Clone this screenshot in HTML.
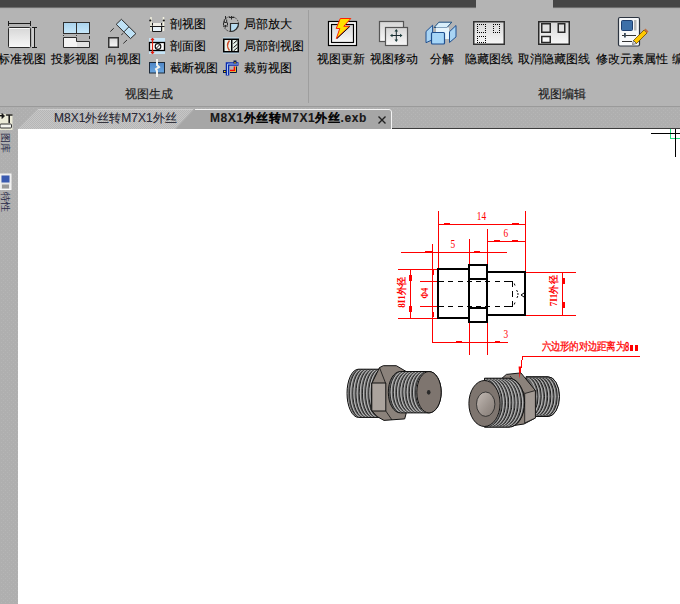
<!DOCTYPE html>
<html><head><meta charset="utf-8">
<style>
*{margin:0;padding:0;box-sizing:border-box}
html,body{width:680px;height:604px;overflow:hidden;background:#fff;font-family:"Liberation Sans",sans-serif}
.a{position:absolute}
#top{left:0;top:0;width:680px;height:7px;background:#464646}
#rib{left:0;top:9px;width:680px;height:98px;background:#b4b4b4}
#ribline{left:0;top:106px;width:680px;height:1px;background:#9a9a9a}
#tabs{left:0;top:107px;width:680px;height:22px;background:#b0b0b0}
#side{left:0;top:107px;width:18px;height:497px;background:#b0b0b0}
#canvas{left:18px;top:129px;width:662px;height:475px;background:#fff}
.t{position:absolute;font-size:12px;line-height:12px;color:#000;white-space:nowrap;-webkit-text-stroke:0.1px #000}
.g{position:absolute;font-size:12px;line-height:12px;color:#1a1a1a;white-space:nowrap;-webkit-text-stroke:0.15px #1a1a1a}
</style></head><body>
<div class="a" id="top"></div>
<div class="a" style="left:0;top:7px;width:680px;height:1px;background:#6e6e6e"></div><div class="a" style="left:0;top:8px;width:680px;height:1px;background:#adadad"></div><div class="a" style="left:476px;top:0;width:77px;height:9px;background:#b4b4b4"></div>
<div class="a" id="rib"></div>
<div class="a" id="ribline"></div>
<div class="a" id="tabs"></div>
<div class="a" id="side"></div>
<div class="a" id="canvas"></div>


<svg class="a" style="left:0;top:0" width="680" height="107">
<defs>
<linearGradient id="gw" x1="0" y1="0" x2="0" y2="1"><stop offset="0" stop-color="#d6d6d6"/><stop offset="1" stop-color="#f8f8f8"/></linearGradient>
<linearGradient id="gb" x1="0" y1="0" x2="0" y2="1"><stop offset="0" stop-color="#a9d2ec"/><stop offset="1" stop-color="#c8e8fa"/></linearGradient>
<linearGradient id="gblue" x1="0" y1="0" x2="0" y2="1"><stop offset="0" stop-color="#4f86c6"/><stop offset="1" stop-color="#6aa6e0"/></linearGradient>
</defs>
<!-- 标准视图 -->
<g stroke="#1a1a1a" stroke-width="1" fill="none">
<path d="M8.5 23.5H30.5M8.5 21V26M30.5 21V26M34.5 27.5V47.5M32 27.5H37M32 47.5H37"/>
</g>
<rect x="8.5" y="27.5" width="22" height="20" rx="1" fill="url(#gw)" stroke="#2a2a2a"/><path d="M9.5 28.5H29.5" stroke="#fafafa"/>
<line x1="33" y1="28" x2="33" y2="47" stroke="#e8e8e8"/>
<!-- 投影视图 -->
<rect x="63.5" y="22.5" width="26" height="11" fill="url(#gb)" stroke="#2e2e2e"/>
<line x1="76.5" y1="22.5" x2="76.5" y2="33.5" stroke="#2e2e2e"/>
<path d="M63.5 37.5H76.5V41.5H89.5V47.5H63.5Z" fill="#f4f4f4" stroke="#2e2e2e"/>
<rect x="77" y="42" width="12" height="5" fill="#e2e2e2"/>
<rect x="63" y="35" width="1" height="1" fill="#333"/><rect x="76" y="35" width="1" height="1" fill="#333"/><rect x="89" y="36" width="1" height="3" fill="#333"/>
<!-- 向视图 -->
<path d="M121.4 19.3L116.2 24.3L130.5 38.6L135.9 33.6Z" fill="#bfe2f6" stroke="#2a2a2a"/>
<path d="M128.7 27L124 31.8" stroke="#2a2a2a"/>
<path d="M110.3 31.6L113.8 28.2M121.3 34.8L123.3 33.3M123.3 43.5L127 40" stroke="#333"/>
<rect x="108.75" y="37.75" width="9.5" height="9.5" fill="url(#gw)" stroke="#333" stroke-width="1.5"/>
<!-- 剖视图 small -->
<path d="M151 17V31M163.5 17V31" stroke="#f4f2e0" stroke-width="1.5"/>
<rect x="152.5" y="23" width="9" height="3" fill="#f0eee6"/>
<path d="M152.5 27V31.5H161.5V27" fill="#e8f2f8" stroke="#1a1a1a" stroke-width="1"/>
<path d="M150 26.5H164.5" stroke="#1a1a1a" stroke-width="1"/>
<path d="M152.5 23V25.5M161.5 23V25.5" stroke="#1a1a1a" stroke-width="1"/>
<circle cx="150.3" cy="20.5" r="1.1" fill="#111"/><circle cx="163.8" cy="20.5" r="1.1" fill="#111"/>
<!-- 剖面图 -->
<rect x="149" y="38" width="16" height="16" fill="#c6e4f6"/>
<rect x="149.5" y="42.5" width="15" height="8" fill="#fff" stroke="#000" stroke-width="1.3"/>
<circle cx="158" cy="46.5" r="2.8" fill="none" stroke="#111" stroke-width="1.2"/>
<path d="M156 48.5L160 44.5" stroke="#111"/>
<path d="M152.5 39V53M151 40L152.5 38.5L154 40M151 52L152.5 53.5L154 52" stroke="#e02010" fill="none" stroke-width="1.2"/>
<!-- 截断视图 -->
<rect x="149.5" y="62.5" width="15" height="10.5" fill="url(#gblue)" stroke="#1d2a3a"/>
<path d="M157 59V65L159 67L156 69L157 71V77" stroke="#f4f4f0" stroke-width="2" fill="none"/>
<!-- 局部放大 -->
<circle cx="231" cy="24" r="7.5" fill="none" stroke="#333" stroke-width="1" stroke-dasharray="1.5 1"/>
<path d="M230.5 23.5H238.5A8 8 0 0 1 230.5 31.5Z" fill="#b8dcf0" stroke="#2a2a2a" stroke-width="1.2"/>
<path d="M225.5 16V19M224.3 19.5V22.5H226.7V19.5M223.5 22.5V25M227.5 22.5V25M225.5 25V27.5M223 26H228M229 17.5H234M231.5 16V19.5" stroke="#2a2a2a" fill="none" stroke-width="1"/>
<!-- 局部剖视图 -->
<rect x="223" y="37.5" width="16" height="16" fill="#bfe0f4"/>
<rect x="223.75" y="39.25" width="14.5" height="12.5" fill="#e8f2ea" stroke="#000" stroke-width="1.5"/>
<path d="M229.5 40.5Q225.5 45.5 229.5 50.5" stroke="#d04a28" stroke-width="1.4" fill="none"/>
<rect x="231" y="40" width="1.5" height="11" fill="#000"/>
<path d="M233.5 43.5L237.5 40M233.5 47.5L237.5 44M233.5 51L237.5 47.5" stroke="#111" stroke-width="1"/>
<!-- 裁剪视图 -->
<path d="M227.5 75.5V64H238.5" stroke="#0a2ab0" stroke-width="3.5" fill="none"/>
<path d="M227.5 75V64H238" stroke="#a8c8f0" stroke-width="1" fill="none"/>
<path d="M230 70.5H234.5V66.5" stroke="#ff0000" stroke-width="1.6" fill="none"/>
<path d="M230 72H236V66.5" stroke="#ffd000" stroke-width="1.2" fill="none"/>
<path d="M236.5 66.5V72.5H230" stroke="#0a1a40" stroke-width="1" fill="none"/>
<rect x="223" y="70" width="3" height="3" fill="#0a1a50"/><rect x="233.5" y="60.5" width="3" height="3" fill="#0a1a50"/>
<rect x="224" y="71" width="1.5" height="1" fill="#ffd000"/><rect x="234.5" y="62" width="1" height="1.5" fill="#ffd000"/>
<!-- 视图更新 -->
<rect x="328.5" y="21.5" width="28" height="24" fill="#fff" stroke="#000" stroke-width="1.2"/>
<rect x="331.5" y="24.5" width="22" height="18" fill="url(#gw)" stroke="#000" stroke-width="1.2"/>
<path d="M340.3 18.5H350.8L343.8 26.3H349.5L336.3 38.6L339.8 28.5H336.2Z" fill="#ffe000" stroke="#ff2000" stroke-width="1"/>
<path d="M349.8 26.5L337 38.5" stroke="#111" stroke-width="1"/>
<!-- 视图移动 -->
<rect x="379.5" y="21.5" width="24" height="20" fill="url(#gw)" stroke="#555" stroke-width="1.2"/>
<rect x="385.5" y="27.5" width="22" height="18" fill="url(#gw)" stroke="#555" stroke-width="1.2"/>
<path d="M396.3 30V41M391 35.5H401.5" stroke="#1a2a30" stroke-width="1"/>
<path d="M396.3 29L394.5 31.5H398.1ZM396.3 42L394.5 39.5H398.1ZM390 35.5L392.5 33.7V37.3ZM402.5 35.5L400 33.7V37.3Z" fill="#1a3a3a"/>
<!-- 分解 -->
<path d="M434.1 27.5L438.9 22.2H451.8L447 27.5Z" fill="#d8eefa" stroke="#1f4f7f"/>
<rect x="436" y="27.5" width="13" height="11.5" fill="#e6f4fc"/>
<path d="M426 31.5L432.6 25.2V39.7L426 42.7Z" fill="#a8d4f4" stroke="#1f4f8f"/>
<path d="M449.5 31.7L456 25.5V36.9L449.5 42.5Z" fill="#a8d4f4" stroke="#1f4f8f"/>
<rect x="431.5" y="32.5" width="13" height="11.5" rx="1" fill="#a6d6f8" stroke="#1f4f8f" stroke-width="1.2"/>
<!-- 隐藏图线 -->
<rect x="473.75" y="21.75" width="30.5" height="22.5" fill="url(#gw)" stroke="#333" stroke-width="1.5"/>
<g fill="#000" shape-rendering="crispEdges">
<rect x="477" y="24" width="1" height="1"/>
<rect x="477" y="26" width="1" height="1"/>
<rect x="477" y="28" width="1" height="1"/>
<rect x="477" y="30" width="1" height="1"/>
<rect x="477" y="32" width="1" height="1"/>
<rect x="479" y="24" width="1" height="1"/>
<rect x="479" y="32" width="1" height="1"/>
<rect x="481" y="24" width="1" height="1"/>
<rect x="481" y="32" width="1" height="1"/>
<rect x="483" y="24" width="1" height="1"/>
<rect x="483" y="32" width="1" height="1"/>
<rect x="485" y="24" width="1" height="1"/>
<rect x="485" y="26" width="1" height="1"/>
<rect x="485" y="28" width="1" height="1"/>
<rect x="485" y="30" width="1" height="1"/>
<rect x="485" y="32" width="1" height="1"/>
<rect x="493" y="24" width="1" height="1"/>
<rect x="493" y="26" width="1" height="1"/>
<rect x="493" y="28" width="1" height="1"/>
<rect x="493" y="30" width="1" height="1"/>
<rect x="493" y="32" width="1" height="1"/>
<rect x="495" y="24" width="1" height="1"/>
<rect x="495" y="32" width="1" height="1"/>
<rect x="497" y="24" width="1" height="1"/>
<rect x="497" y="32" width="1" height="1"/>
<rect x="499" y="24" width="1" height="1"/>
<rect x="499" y="26" width="1" height="1"/>
<rect x="499" y="28" width="1" height="1"/>
<rect x="499" y="30" width="1" height="1"/>
<rect x="499" y="32" width="1" height="1"/>
<rect x="477" y="36" width="1" height="1"/>
<rect x="477" y="38" width="1" height="1"/>
<rect x="477" y="40" width="1" height="1"/>
<rect x="477" y="42" width="1" height="1"/>
<rect x="479" y="36" width="1" height="1"/>
<rect x="479" y="42" width="1" height="1"/>
<rect x="481" y="36" width="1" height="1"/>
<rect x="481" y="42" width="1" height="1"/>
<rect x="483" y="36" width="1" height="1"/>
<rect x="483" y="42" width="1" height="1"/>
<rect x="485" y="36" width="1" height="1"/>
<rect x="485" y="38" width="1" height="1"/>
<rect x="485" y="40" width="1" height="1"/>
<rect x="485" y="42" width="1" height="1"/>
</g>
<!-- 取消隐藏图线 -->
<rect x="538.75" y="21.75" width="30.5" height="22.5" fill="url(#gw)" stroke="#2a2a2a" stroke-width="1.5"/>
<rect x="541.75" y="23.75" width="8.5" height="8.5" fill="#e0e0e0" stroke="#2a2a2a" stroke-width="1.5"/>
<rect x="558.25" y="23.75" width="6.5" height="8.5" fill="#e0e0e0" stroke="#2a2a2a" stroke-width="1.5"/>
<rect x="541.75" y="36.5" width="8.5" height="6" fill="#f8f8f8" stroke="#2a2a2a" stroke-width="1.5"/>
<!-- 修改元素属性 -->
<rect x="618.5" y="17.5" width="21" height="28.5" rx="1.5" fill="#f6f8fa" stroke="#2c3440" stroke-width="1.2"/>
<rect x="621.5" y="20.5" width="11" height="10" rx="1" fill="#3d6fa8" stroke="#1f3f6f"/>
<rect x="634" y="20" width="2.5" height="10.5" fill="#b8b8b8"/>
<path d="M622 35.5H636M622 41.5H632" stroke="#333" stroke-width="1"/>
<rect x="624" y="33" width="1.8" height="4.5" fill="#3a4a5a"/>
<path d="M633.5 40.5L644 30L647 33L636.5 43.5Z" fill="#ffc800" stroke="#6a4800" stroke-width="0.8"/>
<path d="M644 30L645.5 28.5L648.5 31.5L647 33Z" fill="#c07040"/>
<path d="M633.5 40.5L632.5 44.5L636.5 43.5Z" fill="#e8e8e8" stroke="#333" stroke-width="0.6"/>
<!-- top-right of ribbon separator tick -->
</svg>

<!-- ribbon labels -->
<div class="t" style="left:-2px;top:53px">标准视图</div>
<div class="t" style="left:51px;top:53px">投影视图</div>
<div class="t" style="left:105px;top:53px">向视图</div>
<div class="t" style="left:170px;top:18px">剖视图</div>
<div class="t" style="left:170px;top:40px">剖面图</div>
<div class="t" style="left:170px;top:62px">截断视图</div>
<div class="t" style="left:244px;top:18px">局部放大</div>
<div class="t" style="left:244px;top:40px">局部剖视图</div>
<div class="t" style="left:244px;top:62px">裁剪视图</div>
<div class="g" style="left:125px;top:88px">视图生成</div>
<div class="a" style="left:308px;top:10px;width:1px;height:93px;background:#9e9e9e"></div>
<div class="t" style="left:317px;top:53px">视图更新</div>
<div class="t" style="left:370px;top:53px">视图移动</div>
<div class="t" style="left:430px;top:53px">分解</div>
<div class="t" style="left:465px;top:53px">隐藏图线</div>
<div class="t" style="left:518px;top:53px">取消隐藏图线</div>
<div class="t" style="left:596px;top:53px">修改元素属性</div>
<div class="t" style="left:672px;top:53px">编</div>
<div class="g" style="left:538px;top:88px">视图编辑</div>


<svg class="a" style="left:0;top:129px" width="680" height="475" viewBox="0 129 680 475" shape-rendering="crispEdges">
<defs>
<clipPath id="clA1"><path d="M358.5 369.2H378V417.4H358.5A11.5 24.1 0 0 1 358.5 369.2Z"/></clipPath>
<clipPath id="clA2"><path d="M386 371.5H429V412.9H386Z"/></clipPath>
<clipPath id="clB1"><path d="M484.5 378.2H524V427.2H484.5Z"/></clipPath>
<clipPath id="clB2"><path d="M528 376.7H548A11.5 19.9 0 0 1 548 416.5H528Z"/></clipPath>
<linearGradient id="holeg" x1="0" y1="0" x2="1" y2="1"><stop offset="0" stop-color="#c4bcb6"/><stop offset="0.6" stop-color="#9a918b"/><stop offset="1" stop-color="#857c76"/></linearGradient>
</defs>
<g stroke="#ff0000" stroke-width="1" fill="none">
<path d="M438.5 211V269M525.5 211V272M438.5 224.5H525.5"/>
<path d="M487.5 229V272M487.5 241.5H525.5"/>
<path d="M469.5 239V265M432.5 244V343M401 252.5H507"/>
<path d="M398 269.5H438M398 318.5H438M410.5 269.5V318.5"/>
<path d="M420 281.5H438M420 306.5H438"/>
<path d="M526 272.5H576M526 315.5H576M562.5 272.5V315.5"/>
<path d="M469.5 322V355M487.5 322V355M432.5 342.5H508"/>
<path d="M522.5 356.5H640M522.5 356.5L519.5 379"/>
</g>
<g fill="#ff0000">
<rect x="444" y="223" width="6" height="2"/><rect x="512" y="223" width="7" height="2"/>
<rect x="494" y="240" width="6" height="2"/><rect x="512" y="240" width="6" height="2"/>
<rect x="425" y="251" width="7" height="2"/><rect x="474" y="251" width="6" height="2"/>
<rect x="409" y="275" width="3" height="6"/><rect x="409" y="306" width="3" height="6"/>
<rect x="432" y="270" width="2" height="5"/><rect x="432" y="312" width="2" height="5"/>
<rect x="562" y="278" width="3" height="6"/><rect x="562" y="302" width="3" height="6"/>
<rect x="456" y="341" width="6" height="2"/><rect x="495" y="341" width="5" height="2"/>
<path d="M518.5 367L521 367L520 379Z"/>
</g>
<g stroke="#000" stroke-width="2" fill="none">
<path d="M437 269H469M438 268V319M437 318H469"/>
<path d="M469 265H487V322H469Z"/>
<path d="M469 279H487M469 308H487"/>
<path d="M487 272H525V315H487"/>
</g>
<g stroke="#000" stroke-width="1" fill="none">
<path d="M439 281.5H512" stroke-dasharray="5 4.25"/>
<path d="M439 306.5H512" stroke-dasharray="5 4.25"/>
<path d="M507 281.5H512.5V287M512.5 291V297M512.5 301V306.5H507"/>
</g>
<g shape-rendering="geometricPrecision" fill="none" stroke="#000" stroke-width="1">
<path d="M514.2 283.5L515 285.5M514.2 304.5L515 302.5"/>
<path d="M516.5 290Q519.5 294.3 516.5 298.6" stroke-dasharray="2 1.2"/>
<path d="M524 293L521 295L524 297" stroke-width="1"/>
</g>
<g shape-rendering="geometricPrecision">
<defs>
<clipPath id="kA1"><path d="M358.5 369.2H382V417.4H358.5A11.5 24.1 0 0 1 358.5 369.2Z"/></clipPath>
<clipPath id="kA2"><path d="M400.5 371.5A12.2 20.7 0 0 0 400.5 412.9H429A12.2 20.7 0 0 0 429 371.5Z"/></clipPath>
<clipPath id="kB1"><path d="M484.5 378.2H509A15.6 24.5 0 0 1 509 427.2H484.5Z"/></clipPath>
<clipPath id="kB2"><path d="M526 376.7H548A11.5 19.9 0 0 1 548 416.5H526Z"/></clipPath>
<linearGradient id="cylg" x1="0" y1="0" x2="0" y2="1"><stop offset="0" stop-color="#555"/><stop offset="0.45" stop-color="#8a8a8a"/><stop offset="1" stop-color="#505050"/></linearGradient>
</defs>
<!-- Part A -->
<path d="M358.5 369.2H382V417.4H358.5A11.5 24.1 0 0 1 358.5 369.2Z" fill="url(#cylg)"/>
<g clip-path="url(#kA1)"><path d="M359.00 369.2A11.5 24.1 0 0 0 359.00 417.4" stroke="#b4b4b4" stroke-width="1.2" fill="none"/><path d="M360.30 369.2A11.5 24.1 0 0 0 360.30 417.4" stroke="#505050" stroke-width="0.8" fill="none"/><path d="M361.20 369.2A11.5 24.1 0 0 0 361.20 417.4" stroke="#1c1c1c" stroke-width="1.0" fill="none"/><path d="M362.20 369.2A11.5 24.1 0 0 0 362.20 417.4" stroke="#b4b4b4" stroke-width="1.2" fill="none"/><path d="M363.50 369.2A11.5 24.1 0 0 0 363.50 417.4" stroke="#505050" stroke-width="0.8" fill="none"/><path d="M364.40 369.2A11.5 24.1 0 0 0 364.40 417.4" stroke="#1c1c1c" stroke-width="1.0" fill="none"/><path d="M365.40 369.2A11.5 24.1 0 0 0 365.40 417.4" stroke="#b4b4b4" stroke-width="1.2" fill="none"/><path d="M366.70 369.2A11.5 24.1 0 0 0 366.70 417.4" stroke="#505050" stroke-width="0.8" fill="none"/><path d="M367.60 369.2A11.5 24.1 0 0 0 367.60 417.4" stroke="#1c1c1c" stroke-width="1.0" fill="none"/><path d="M368.60 369.2A11.5 24.1 0 0 0 368.60 417.4" stroke="#b4b4b4" stroke-width="1.2" fill="none"/><path d="M369.90 369.2A11.5 24.1 0 0 0 369.90 417.4" stroke="#505050" stroke-width="0.8" fill="none"/><path d="M370.80 369.2A11.5 24.1 0 0 0 370.80 417.4" stroke="#1c1c1c" stroke-width="1.0" fill="none"/><path d="M371.80 369.2A11.5 24.1 0 0 0 371.80 417.4" stroke="#b4b4b4" stroke-width="1.2" fill="none"/><path d="M373.10 369.2A11.5 24.1 0 0 0 373.10 417.4" stroke="#505050" stroke-width="0.8" fill="none"/><path d="M374.00 369.2A11.5 24.1 0 0 0 374.00 417.4" stroke="#1c1c1c" stroke-width="1.0" fill="none"/><path d="M375.00 369.2A11.5 24.1 0 0 0 375.00 417.4" stroke="#b4b4b4" stroke-width="1.2" fill="none"/><path d="M376.30 369.2A11.5 24.1 0 0 0 376.30 417.4" stroke="#505050" stroke-width="0.8" fill="none"/><path d="M377.20 369.2A11.5 24.1 0 0 0 377.20 417.4" stroke="#1c1c1c" stroke-width="1.0" fill="none"/><path d="M378.20 369.2A11.5 24.1 0 0 0 378.20 417.4" stroke="#b4b4b4" stroke-width="1.2" fill="none"/><path d="M379.50 369.2A11.5 24.1 0 0 0 379.50 417.4" stroke="#505050" stroke-width="0.8" fill="none"/><path d="M380.40 369.2A11.5 24.1 0 0 0 380.40 417.4" stroke="#1c1c1c" stroke-width="1.0" fill="none"/><path d="M381.40 369.2A11.5 24.1 0 0 0 381.40 417.4" stroke="#b4b4b4" stroke-width="1.2" fill="none"/><path d="M382.70 369.2A11.5 24.1 0 0 0 382.70 417.4" stroke="#505050" stroke-width="0.8" fill="none"/><path d="M383.60 369.2A11.5 24.1 0 0 0 383.60 417.4" stroke="#1c1c1c" stroke-width="1.0" fill="none"/><path d="M384.60 369.2A11.5 24.1 0 0 0 384.60 417.4" stroke="#b4b4b4" stroke-width="1.2" fill="none"/><path d="M385.90 369.2A11.5 24.1 0 0 0 385.90 417.4" stroke="#505050" stroke-width="0.8" fill="none"/><path d="M386.80 369.2A11.5 24.1 0 0 0 386.80 417.4" stroke="#1c1c1c" stroke-width="1.0" fill="none"/><path d="M387.80 369.2A11.5 24.1 0 0 0 387.80 417.4" stroke="#b4b4b4" stroke-width="1.2" fill="none"/><path d="M389.10 369.2A11.5 24.1 0 0 0 389.10 417.4" stroke="#505050" stroke-width="0.8" fill="none"/><path d="M390.00 369.2A11.5 24.1 0 0 0 390.00 417.4" stroke="#1c1c1c" stroke-width="1.0" fill="none"/><path d="M391.00 369.2A11.5 24.1 0 0 0 391.00 417.4" stroke="#b4b4b4" stroke-width="1.2" fill="none"/><path d="M392.30 369.2A11.5 24.1 0 0 0 392.30 417.4" stroke="#505050" stroke-width="0.8" fill="none"/><path d="M393.20 369.2A11.5 24.1 0 0 0 393.20 417.4" stroke="#1c1c1c" stroke-width="1.0" fill="none"/></g>
<path d="M358.5 369.2H382V417.4H358.5A11.5 24.1 0 0 1 358.5 369.2Z" fill="none" stroke="#111" stroke-width="1"/>
<path d="M372 383L379.5 367.6L383.3 365.7H396.3L406.2 371.5L410 380L406 414L404.7 418.9L384 420.4L377.2 416.6L371 410Z" fill="#8b827b" stroke="#111" stroke-width="1"/>
<path d="M379.5 367.6L385.5 383" fill="none" stroke="#111" stroke-width="0.8"/>
<path d="M371.8 383H385.8V411H371.8Z" fill="#aba39d" stroke="#111" stroke-width="1"/>
<path d="M385.8 411L392 420" fill="none" stroke="#111" stroke-width="0.8"/>
<path d="M400.5 371.5A12.2 20.7 0 0 0 400.5 412.9H429A12.2 20.7 0 0 0 429 371.5Z" fill="url(#cylg)"/>
<g clip-path="url(#kA2)"><path d="M400.20 371.5A12.2 20.7 0 0 0 400.20 412.9" stroke="#b4b4b4" stroke-width="1.2" fill="none"/><path d="M401.50 371.5A12.2 20.7 0 0 0 401.50 412.9" stroke="#505050" stroke-width="0.8" fill="none"/><path d="M402.40 371.5A12.2 20.7 0 0 0 402.40 412.9" stroke="#1c1c1c" stroke-width="1.0" fill="none"/><path d="M403.40 371.5A12.2 20.7 0 0 0 403.40 412.9" stroke="#b4b4b4" stroke-width="1.2" fill="none"/><path d="M404.70 371.5A12.2 20.7 0 0 0 404.70 412.9" stroke="#505050" stroke-width="0.8" fill="none"/><path d="M405.60 371.5A12.2 20.7 0 0 0 405.60 412.9" stroke="#1c1c1c" stroke-width="1.0" fill="none"/><path d="M406.60 371.5A12.2 20.7 0 0 0 406.60 412.9" stroke="#b4b4b4" stroke-width="1.2" fill="none"/><path d="M407.90 371.5A12.2 20.7 0 0 0 407.90 412.9" stroke="#505050" stroke-width="0.8" fill="none"/><path d="M408.80 371.5A12.2 20.7 0 0 0 408.80 412.9" stroke="#1c1c1c" stroke-width="1.0" fill="none"/><path d="M409.80 371.5A12.2 20.7 0 0 0 409.80 412.9" stroke="#b4b4b4" stroke-width="1.2" fill="none"/><path d="M411.10 371.5A12.2 20.7 0 0 0 411.10 412.9" stroke="#505050" stroke-width="0.8" fill="none"/><path d="M412.00 371.5A12.2 20.7 0 0 0 412.00 412.9" stroke="#1c1c1c" stroke-width="1.0" fill="none"/><path d="M413.00 371.5A12.2 20.7 0 0 0 413.00 412.9" stroke="#b4b4b4" stroke-width="1.2" fill="none"/><path d="M414.30 371.5A12.2 20.7 0 0 0 414.30 412.9" stroke="#505050" stroke-width="0.8" fill="none"/><path d="M415.20 371.5A12.2 20.7 0 0 0 415.20 412.9" stroke="#1c1c1c" stroke-width="1.0" fill="none"/><path d="M416.20 371.5A12.2 20.7 0 0 0 416.20 412.9" stroke="#b4b4b4" stroke-width="1.2" fill="none"/><path d="M417.50 371.5A12.2 20.7 0 0 0 417.50 412.9" stroke="#505050" stroke-width="0.8" fill="none"/><path d="M418.40 371.5A12.2 20.7 0 0 0 418.40 412.9" stroke="#1c1c1c" stroke-width="1.0" fill="none"/><path d="M419.40 371.5A12.2 20.7 0 0 0 419.40 412.9" stroke="#b4b4b4" stroke-width="1.2" fill="none"/><path d="M420.70 371.5A12.2 20.7 0 0 0 420.70 412.9" stroke="#505050" stroke-width="0.8" fill="none"/><path d="M421.60 371.5A12.2 20.7 0 0 0 421.60 412.9" stroke="#1c1c1c" stroke-width="1.0" fill="none"/><path d="M422.60 371.5A12.2 20.7 0 0 0 422.60 412.9" stroke="#b4b4b4" stroke-width="1.2" fill="none"/><path d="M423.90 371.5A12.2 20.7 0 0 0 423.90 412.9" stroke="#505050" stroke-width="0.8" fill="none"/><path d="M424.80 371.5A12.2 20.7 0 0 0 424.80 412.9" stroke="#1c1c1c" stroke-width="1.0" fill="none"/><path d="M425.80 371.5A12.2 20.7 0 0 0 425.80 412.9" stroke="#b4b4b4" stroke-width="1.2" fill="none"/><path d="M427.10 371.5A12.2 20.7 0 0 0 427.10 412.9" stroke="#505050" stroke-width="0.8" fill="none"/><path d="M428.00 371.5A12.2 20.7 0 0 0 428.00 412.9" stroke="#1c1c1c" stroke-width="1.0" fill="none"/><path d="M429.00 371.5A12.2 20.7 0 0 0 429.00 412.9" stroke="#b4b4b4" stroke-width="1.2" fill="none"/><path d="M430.30 371.5A12.2 20.7 0 0 0 430.30 412.9" stroke="#505050" stroke-width="0.8" fill="none"/><path d="M431.20 371.5A12.2 20.7 0 0 0 431.20 412.9" stroke="#1c1c1c" stroke-width="1.0" fill="none"/><path d="M432.20 371.5A12.2 20.7 0 0 0 432.20 412.9" stroke="#b4b4b4" stroke-width="1.2" fill="none"/><path d="M433.50 371.5A12.2 20.7 0 0 0 433.50 412.9" stroke="#505050" stroke-width="0.8" fill="none"/><path d="M434.40 371.5A12.2 20.7 0 0 0 434.40 412.9" stroke="#1c1c1c" stroke-width="1.0" fill="none"/></g>
<path d="M400.5 371.5A12.2 20.7 0 0 0 400.5 412.9H429A12.2 20.7 0 0 0 429 371.5Z" fill="none" stroke="#111" stroke-width="1"/>
<ellipse cx="429" cy="392.2" rx="12.2" ry="20.7" fill="#7e756f" stroke="#111" stroke-width="1"/>
<ellipse cx="428.7" cy="392.3" rx="1.8" ry="2.4" fill="#2a2a2a"/>
<!-- Part B -->
<path d="M526 376.7H548A11.5 19.9 0 0 1 548 416.5H526Z" fill="url(#cylg)"/>
<g clip-path="url(#kB2)"><path d="M524.50 376.7A11.5 19.9 0 0 1 524.50 416.5" stroke="#b4b4b4" stroke-width="1.2" fill="none"/><path d="M525.80 376.7A11.5 19.9 0 0 1 525.80 416.5" stroke="#505050" stroke-width="0.8" fill="none"/><path d="M526.70 376.7A11.5 19.9 0 0 1 526.70 416.5" stroke="#1c1c1c" stroke-width="1.0" fill="none"/><path d="M527.70 376.7A11.5 19.9 0 0 1 527.70 416.5" stroke="#b4b4b4" stroke-width="1.2" fill="none"/><path d="M529.00 376.7A11.5 19.9 0 0 1 529.00 416.5" stroke="#505050" stroke-width="0.8" fill="none"/><path d="M529.90 376.7A11.5 19.9 0 0 1 529.90 416.5" stroke="#1c1c1c" stroke-width="1.0" fill="none"/><path d="M530.90 376.7A11.5 19.9 0 0 1 530.90 416.5" stroke="#b4b4b4" stroke-width="1.2" fill="none"/><path d="M532.20 376.7A11.5 19.9 0 0 1 532.20 416.5" stroke="#505050" stroke-width="0.8" fill="none"/><path d="M533.10 376.7A11.5 19.9 0 0 1 533.10 416.5" stroke="#1c1c1c" stroke-width="1.0" fill="none"/><path d="M534.10 376.7A11.5 19.9 0 0 1 534.10 416.5" stroke="#b4b4b4" stroke-width="1.2" fill="none"/><path d="M535.40 376.7A11.5 19.9 0 0 1 535.40 416.5" stroke="#505050" stroke-width="0.8" fill="none"/><path d="M536.30 376.7A11.5 19.9 0 0 1 536.30 416.5" stroke="#1c1c1c" stroke-width="1.0" fill="none"/><path d="M537.30 376.7A11.5 19.9 0 0 1 537.30 416.5" stroke="#b4b4b4" stroke-width="1.2" fill="none"/><path d="M538.60 376.7A11.5 19.9 0 0 1 538.60 416.5" stroke="#505050" stroke-width="0.8" fill="none"/><path d="M539.50 376.7A11.5 19.9 0 0 1 539.50 416.5" stroke="#1c1c1c" stroke-width="1.0" fill="none"/><path d="M540.50 376.7A11.5 19.9 0 0 1 540.50 416.5" stroke="#b4b4b4" stroke-width="1.2" fill="none"/><path d="M541.80 376.7A11.5 19.9 0 0 1 541.80 416.5" stroke="#505050" stroke-width="0.8" fill="none"/><path d="M542.70 376.7A11.5 19.9 0 0 1 542.70 416.5" stroke="#1c1c1c" stroke-width="1.0" fill="none"/><path d="M543.70 376.7A11.5 19.9 0 0 1 543.70 416.5" stroke="#b4b4b4" stroke-width="1.2" fill="none"/><path d="M545.00 376.7A11.5 19.9 0 0 1 545.00 416.5" stroke="#505050" stroke-width="0.8" fill="none"/><path d="M545.90 376.7A11.5 19.9 0 0 1 545.90 416.5" stroke="#1c1c1c" stroke-width="1.0" fill="none"/><path d="M546.90 376.7A11.5 19.9 0 0 1 546.90 416.5" stroke="#b4b4b4" stroke-width="1.2" fill="none"/><path d="M548.20 376.7A11.5 19.9 0 0 1 548.20 416.5" stroke="#505050" stroke-width="0.8" fill="none"/><path d="M549.10 376.7A11.5 19.9 0 0 1 549.10 416.5" stroke="#1c1c1c" stroke-width="1.0" fill="none"/></g>
<path d="M526 376.7H548A11.5 19.9 0 0 1 548 416.5H526Z" fill="none" stroke="#111" stroke-width="1"/>
<path d="M506.4 374.4L520.9 372.9L535.4 390.5L535.4 418L524 424L507.9 426.4L500 420L500 380Z" fill="#8b827b" stroke="#111" stroke-width="1"/>
<path d="M524.7 393.5L535.4 390.5V418L524.7 423Z" fill="#a29a94" stroke="#111" stroke-width="0.8"/>
<path d="M524.7 393.5L510 376" stroke="#111" stroke-width="0.8"/>
<path d="M484.5 378.2H509A15.6 24.5 0 0 1 509 427.2H484.5Z" fill="url(#cylg)"/>
<g clip-path="url(#kB1)"><path d="M481.40 378.2A15.6 24.5 0 0 1 481.40 427.2" stroke="#b4b4b4" stroke-width="1.2" fill="none"/><path d="M482.70 378.2A15.6 24.5 0 0 1 482.70 427.2" stroke="#505050" stroke-width="0.8" fill="none"/><path d="M483.60 378.2A15.6 24.5 0 0 1 483.60 427.2" stroke="#1c1c1c" stroke-width="1.0" fill="none"/><path d="M484.60 378.2A15.6 24.5 0 0 1 484.60 427.2" stroke="#b4b4b4" stroke-width="1.2" fill="none"/><path d="M485.90 378.2A15.6 24.5 0 0 1 485.90 427.2" stroke="#505050" stroke-width="0.8" fill="none"/><path d="M486.80 378.2A15.6 24.5 0 0 1 486.80 427.2" stroke="#1c1c1c" stroke-width="1.0" fill="none"/><path d="M487.80 378.2A15.6 24.5 0 0 1 487.80 427.2" stroke="#b4b4b4" stroke-width="1.2" fill="none"/><path d="M489.10 378.2A15.6 24.5 0 0 1 489.10 427.2" stroke="#505050" stroke-width="0.8" fill="none"/><path d="M490.00 378.2A15.6 24.5 0 0 1 490.00 427.2" stroke="#1c1c1c" stroke-width="1.0" fill="none"/><path d="M491.00 378.2A15.6 24.5 0 0 1 491.00 427.2" stroke="#b4b4b4" stroke-width="1.2" fill="none"/><path d="M492.30 378.2A15.6 24.5 0 0 1 492.30 427.2" stroke="#505050" stroke-width="0.8" fill="none"/><path d="M493.20 378.2A15.6 24.5 0 0 1 493.20 427.2" stroke="#1c1c1c" stroke-width="1.0" fill="none"/><path d="M494.20 378.2A15.6 24.5 0 0 1 494.20 427.2" stroke="#b4b4b4" stroke-width="1.2" fill="none"/><path d="M495.50 378.2A15.6 24.5 0 0 1 495.50 427.2" stroke="#505050" stroke-width="0.8" fill="none"/><path d="M496.40 378.2A15.6 24.5 0 0 1 496.40 427.2" stroke="#1c1c1c" stroke-width="1.0" fill="none"/><path d="M497.40 378.2A15.6 24.5 0 0 1 497.40 427.2" stroke="#b4b4b4" stroke-width="1.2" fill="none"/><path d="M498.70 378.2A15.6 24.5 0 0 1 498.70 427.2" stroke="#505050" stroke-width="0.8" fill="none"/><path d="M499.60 378.2A15.6 24.5 0 0 1 499.60 427.2" stroke="#1c1c1c" stroke-width="1.0" fill="none"/><path d="M500.60 378.2A15.6 24.5 0 0 1 500.60 427.2" stroke="#b4b4b4" stroke-width="1.2" fill="none"/><path d="M501.90 378.2A15.6 24.5 0 0 1 501.90 427.2" stroke="#505050" stroke-width="0.8" fill="none"/><path d="M502.80 378.2A15.6 24.5 0 0 1 502.80 427.2" stroke="#1c1c1c" stroke-width="1.0" fill="none"/><path d="M503.80 378.2A15.6 24.5 0 0 1 503.80 427.2" stroke="#b4b4b4" stroke-width="1.2" fill="none"/><path d="M505.10 378.2A15.6 24.5 0 0 1 505.10 427.2" stroke="#505050" stroke-width="0.8" fill="none"/><path d="M506.00 378.2A15.6 24.5 0 0 1 506.00 427.2" stroke="#1c1c1c" stroke-width="1.0" fill="none"/><path d="M507.00 378.2A15.6 24.5 0 0 1 507.00 427.2" stroke="#b4b4b4" stroke-width="1.2" fill="none"/><path d="M508.30 378.2A15.6 24.5 0 0 1 508.30 427.2" stroke="#505050" stroke-width="0.8" fill="none"/><path d="M509.20 378.2A15.6 24.5 0 0 1 509.20 427.2" stroke="#1c1c1c" stroke-width="1.0" fill="none"/><path d="M510.20 378.2A15.6 24.5 0 0 1 510.20 427.2" stroke="#b4b4b4" stroke-width="1.2" fill="none"/><path d="M511.50 378.2A15.6 24.5 0 0 1 511.50 427.2" stroke="#505050" stroke-width="0.8" fill="none"/><path d="M512.40 378.2A15.6 24.5 0 0 1 512.40 427.2" stroke="#1c1c1c" stroke-width="1.0" fill="none"/></g>
<path d="M484.5 378.2H509A15.6 24.5 0 0 1 509 427.2H484.5Z" fill="none" stroke="#111" stroke-width="1"/>
<ellipse cx="484.5" cy="403.5" rx="15.6" ry="23" fill="#7e756f" stroke="#111" stroke-width="1"/>
<ellipse cx="485.7" cy="404.2" rx="9.2" ry="12.2" fill="url(#holeg)" stroke="#222" stroke-width="0.8"/>
<path d="M518.6 366.5L521.2 366.5L519.6 379Z" fill="#ff0000"/>
</g>
<g fill="#ff0000" font-family="Liberation Serif" font-size="13">
<text x="0" y="0" transform="translate(476.8 219.8) scale(0.72 1)">14</text>
<text x="0" y="0" transform="translate(503.4 236.7) scale(0.72 1)">6</text>
<text x="0" y="0" transform="translate(450.4 247.7) scale(0.72 1)">5</text>
<text x="0" y="0" transform="translate(503.6 337.8) scale(0.72 1)">3</text>
<text x="0" y="0" transform="translate(404.6 307.7) rotate(-90) scale(0.9 1)" font-size="10" font-weight="bold">8I1外径</text>
<text x="0" y="0" transform="translate(427.8 298.4) rotate(-90) scale(0.8 1)" font-size="10" font-weight="bold">Φ4</text>
<text x="0" y="0" transform="translate(556.6 306.2) rotate(-90) scale(0.9 1)" font-size="10" font-weight="bold">7I1外径</text>
<text x="0" y="0" transform="translate(541.5 349.6) scale(0.94 1.08)" font-size="10" font-family="Liberation Sans" stroke="#ff0000" stroke-width="0.25">六边形的对边距离为</text><text x="0" y="0" transform="translate(625 350.8) scale(0.62 1.05)" font-size="12" font-family="Liberation Sans" stroke="#ff0000" stroke-width="0.5">8</text><rect x="630" y="345" width="3" height="6"/><rect x="635" y="345" width="3" height="6"/>
</g>
</svg>


<!-- tabs -->
<svg class="a" style="left:0;top:107px" width="680" height="22">
<defs>
<pattern id="dots" width="4" height="4" patternUnits="userSpaceOnUse"><rect width="4" height="4" fill="#afafaf"/><rect x="1" y="1" width="1" height="1" fill="#b6b6b6"/><rect x="3" y="3" width="1" height="1" fill="#b6b6b6"/></pattern>
<pattern id="hatch" width="2" height="2" patternUnits="userSpaceOnUse"><rect width="2" height="2" fill="#b6b6b6"/><rect x="0" y="0" width="1" height="1" fill="#c6c6c6"/><rect x="1" y="1" width="1" height="1" fill="#c6c6c6"/></pattern>
</defs>
<rect x="0" y="0" width="680" height="22" fill="url(#dots)"/>
<path d="M18 22L38 2H193L175 22Z" fill="url(#hatch)"/>
<path d="M38 2.5H193" stroke="#cfcfcf" stroke-width="1"/>
<path d="M176 22L195 2H389Q392 2 392 5V22Z" fill="#a6a6a6"/>
<path d="M195 2.5H389Q391.5 2.5 391.5 5V22" stroke="#f4f4f4" stroke-width="1" fill="none"/>
<path d="M392 21.5H680" stroke="#3c3c3c" stroke-width="1"/>
<path d="M378.5 9.5L385.5 16.5M385.5 9.5L378.5 16.5" stroke="#222" stroke-width="1.4"/>
</svg>
<svg class="a" style="left:0;top:129px" width="18" height="475"><rect width="18" height="475" fill="url(#dots)"/></svg>

<div class="t" style="left:54px;top:112px;color:#2a2a3a">M8X1外丝转M7X1外丝</div>
<div class="t" style="left:210px;top:112px;font-weight:bold;color:#1a1a1a;letter-spacing:0.6px">M8X1外丝转M7X1外丝.exb</div>


<!-- crosshair -->
<div class="a" style="left:670px;top:129px;width:10px;height:10px;border-left:1px solid #20e080;border-bottom:1px solid #20e080"></div>
<div class="a" style="left:651px;top:133px;width:29px;height:1px;background:#000"></div>
<div class="a" style="left:675px;top:129px;width:1px;height:28px;background:#000"></div>
<!-- sidebar -->
<svg class="a" style="left:0;top:107px" width="18" height="120">
<rect x="0" y="7" width="12.5" height="16" fill="#ecebd8"/>
<path d="M0 8.5H3" stroke="#111" stroke-width="1"/>
<path d="M0 9H2M2 6.5L4.5 9L2 11.5Z" fill="#111" stroke="#111" stroke-width="0.8"/>
<path d="M6.5 8H12M9.2 8V15.5" stroke="#222" stroke-width="1.6" fill="none" stroke-linecap="round"/>
<rect x="0" y="17" width="11.5" height="4" rx="1" fill="#f6f6f0" stroke="#333" stroke-width="1"/>

<rect x="0" y="67" width="11" height="15.5" fill="#e8e8e8" stroke="#f8f8f8" stroke-width="1"/>
<rect x="1.5" y="68.5" width="8" height="7" fill="#3a5ab0"/>
<rect x="2" y="77.5" width="7" height="4" fill="#999"/>
</svg>
<div class="a" style="left:10px;top:133px;font-size:10px;line-height:10px;color:#2a2a48;transform-origin:0 0;transform:rotate(90deg);white-space:nowrap">图库</div>
<div class="a" style="left:10px;top:192px;font-size:10px;line-height:10px;color:#2a2a48;transform-origin:0 0;transform:rotate(90deg);white-space:nowrap">特性</div>
</body></html>
